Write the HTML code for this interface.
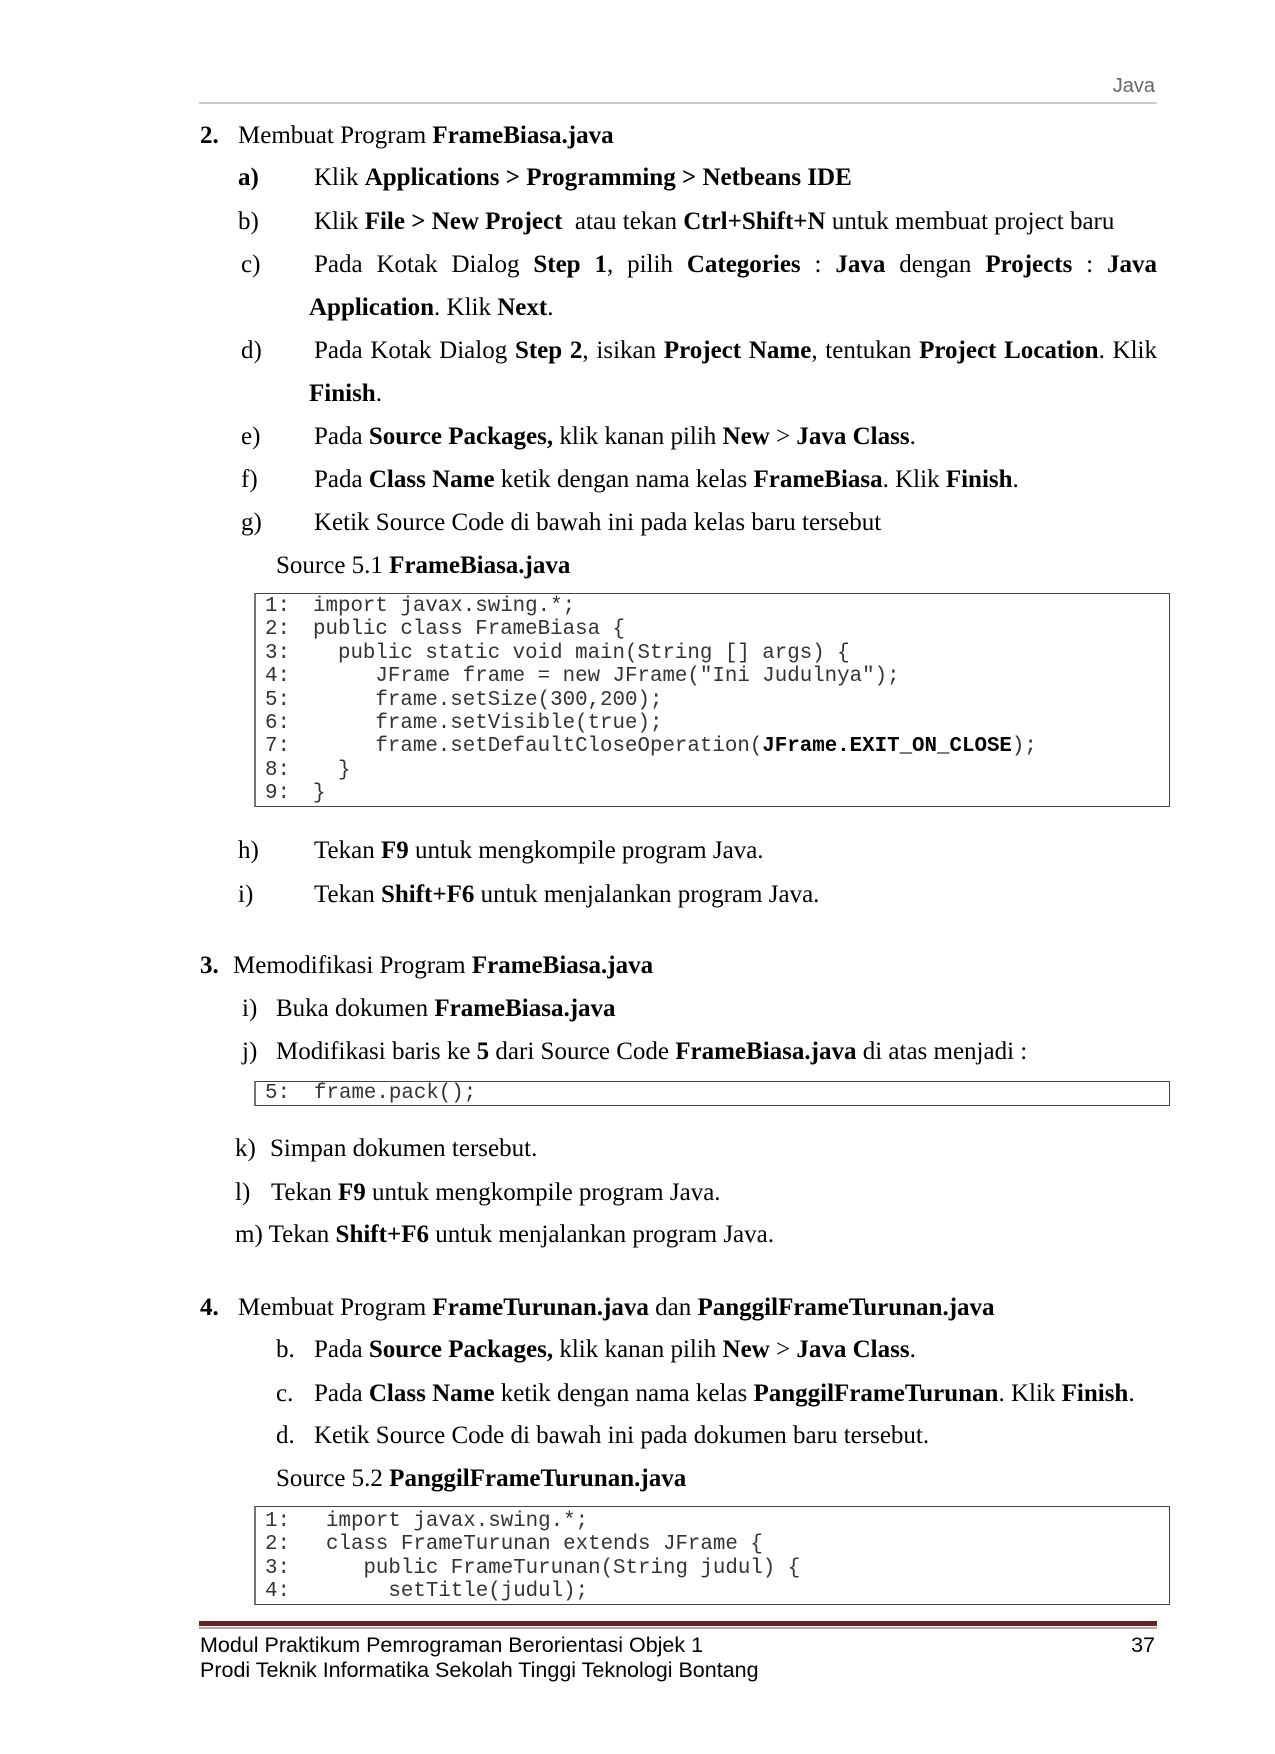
<!DOCTYPE html>
<html><head><meta charset="utf-8"><style>
body{margin:0;background:#fff;}
#p{position:relative;width:1275px;height:1754px;overflow:hidden;font-family:"Liberation Serif",serif;font-size:25px;color:#000;}
.l{position:absolute;line-height:28px;white-space:nowrap;}
.b{font-weight:bold;}
.box{position:absolute;left:254px;width:916px;border:1px solid #444;border-left:2px solid #777;box-sizing:border-box;}
.c{position:absolute;font-family:"Liberation Mono",monospace;font-size:20.8px;line-height:23.4px;color:#333;white-space:pre;}
.sans{font-family:"Liberation Sans",sans-serif;}
</style></head><body><div id="p">
<div class="l sans" style="right:120px;top:72px;font-size:20px;color:#666;">Java</div>
<div style="position:absolute;left:199px;top:102px;width:958px;height:2px;background:#ccc;"></div>

<div class="l b" style="left:200px;top:122px">2.</div>
<div class="l" style="left:238px;top:122px">Membuat Program <b>FrameBiasa.java</b></div>

<div class="l b" style="left:238px;top:164px">a)</div>
<div class="l" style="left:314px;top:164px">Klik <b>Applications &gt; Programming &gt; Netbeans IDE</b></div>
<div class="l" style="left:238px;top:208px">b)</div>
<div class="l" style="left:314px;top:208px">Klik <b>File &gt; New Project</b>&nbsp; atau tekan <b>Ctrl+Shift+N</b> untuk membuat project baru</div>
<div class="l" style="left:241px;top:251px">c)</div>
<div class="l" style="left:314px;top:251px;width:843px;text-align:justify;text-align-last:justify;">Pada Kotak Dialog <b>Step 1</b>, pilih <b>Categories</b> : <b>Java</b> dengan <b>Projects</b> : <b>Java</b></div>
<div class="l" style="left:309px;top:294px"><b>Application</b>. Klik <b>Next</b>.</div>
<div class="l" style="left:241px;top:337px">d)</div>
<div class="l" style="left:314px;top:337px;width:843px;text-align:justify;text-align-last:justify;">Pada Kotak Dialog <b>Step 2</b>, isikan <b>Project Name</b>, tentukan <b>Project Location</b>. Klik</div>
<div class="l" style="left:309px;top:380px"><b>Finish</b>.</div>
<div class="l" style="left:241px;top:423px">e)</div>
<div class="l" style="left:314px;top:423px">Pada <b>Source Packages,</b> klik kanan pilih <b>New</b> &gt; <b>Java Class</b>.</div>
<div class="l" style="left:241px;top:466px">f)</div>
<div class="l" style="left:314px;top:466px">Pada <b>Class Name</b> ketik dengan nama kelas <b>FrameBiasa</b>. Klik <b>Finish</b>.</div>
<div class="l" style="left:241px;top:509px">g)</div>
<div class="l" style="left:314px;top:509px">Ketik Source Code di bawah ini pada kelas baru tersebut</div>
<div class="l" style="left:276px;top:552px">Source 5.1 <b>FrameBiasa.java</b></div>

<div class="box" style="top:593px;height:214px;"></div>
<div class="c" style="left:265px;top:595px">1:
2:
3:
4:
5:
6:
7:
8:
9:</div>
<div class="c" style="left:313px;top:595px">import javax.swing.*;
public class FrameBiasa {
  public static void main(String [] args) {
     JFrame frame = new JFrame("Ini Judulnya");
     frame.setSize(300,200);
     frame.setVisible(true);
     frame.setDefaultCloseOperation(<b style="color:#000">JFrame.EXIT_ON_CLOSE</b>);
  }
}</div>

<div class="l" style="left:238px;top:837px">h)</div>
<div class="l" style="left:314px;top:837px">Tekan <b>F9</b> untuk mengkompile program Java.</div>
<div class="l" style="left:238px;top:881px">i)</div>
<div class="l" style="left:314px;top:881px">Tekan <b>Shift+F6</b> untuk menjalankan program Java.</div>

<div class="l b" style="left:200px;top:952px">3.</div>
<div class="l" style="left:233px;top:952px">Memodifikasi Program <b>FrameBiasa.java</b></div>
<div class="l" style="left:242px;top:995px">i)</div>
<div class="l" style="left:276px;top:995px">Buka dokumen <b>FrameBiasa.java</b></div>
<div class="l" style="left:242px;top:1038px">j)</div>
<div class="l" style="left:276px;top:1038px">Modifikasi baris ke <b>5</b> dari Source Code <b>FrameBiasa.java</b> di atas menjadi :</div>
<div class="box" style="top:1081px;height:25px;"></div>
<div class="c" style="left:265px;top:1082px">5:</div>
<div class="c" style="left:314px;top:1082px">frame.pack();</div>

<div class="l" style="left:235px;top:1135px">k)</div>
<div class="l" style="left:270px;top:1135px">Simpan dokumen tersebut.</div>
<div class="l" style="left:235px;top:1179px">l)</div>
<div class="l" style="left:271px;top:1179px">Tekan <b>F9</b> untuk mengkompile program Java.</div>
<div class="l" style="left:235px;top:1221px">m) Tekan <b>Shift+F6</b> untuk menjalankan program Java.</div>

<div class="l b" style="left:200px;top:1294px">4.</div>
<div class="l" style="left:238px;top:1294px">Membuat Program <b>FrameTurunan.java</b> dan <b>PanggilFrameTurunan.java</b></div>
<div class="l" style="left:276px;top:1336px">b.</div>
<div class="l" style="left:314px;top:1336px">Pada <b>Source Packages,</b> klik kanan pilih <b>New</b> &gt; <b>Java Class</b>.</div>
<div class="l" style="left:276px;top:1380px">c.</div>
<div class="l" style="left:314px;top:1380px">Pada <b>Class Name</b> ketik dengan nama kelas <b>PanggilFrameTurunan</b>. Klik <b>Finish</b>.</div>
<div class="l" style="left:276px;top:1422px">d.</div>
<div class="l" style="left:314px;top:1422px">Ketik Source Code di bawah ini pada dokumen baru tersebut.</div>
<div class="l" style="left:276px;top:1465px">Source 5.2 <b>PanggilFrameTurunan.java</b></div>

<div class="box" style="top:1506px;height:99px;"></div>
<div class="c" style="left:265px;top:1510px">1:
2:
3:
4:</div>
<div class="c" style="left:326px;top:1510px">import javax.swing.*;
class FrameTurunan extends JFrame {
   public FrameTurunan(String judul) {
     setTitle(judul);</div>

<div style="position:absolute;left:199px;top:1621px;width:958px;height:5px;background:#632523;"></div>
<div style="position:absolute;left:199px;top:1627px;width:958px;height:2px;background:#c9a09e;"></div>
<div class="l sans" style="left:200px;top:1632px;font-size:21.5px;line-height:26px;">Modul Praktikum Pemrograman Berorientasi Objek 1</div>
<div class="l sans" style="right:120px;top:1632px;font-size:21.5px;line-height:26px;">37</div>
<div class="l sans" style="left:200px;top:1657px;font-size:21.5px;line-height:26px;">Prodi Teknik Informatika Sekolah Tinggi Teknologi Bontang</div>
</div></body></html>
